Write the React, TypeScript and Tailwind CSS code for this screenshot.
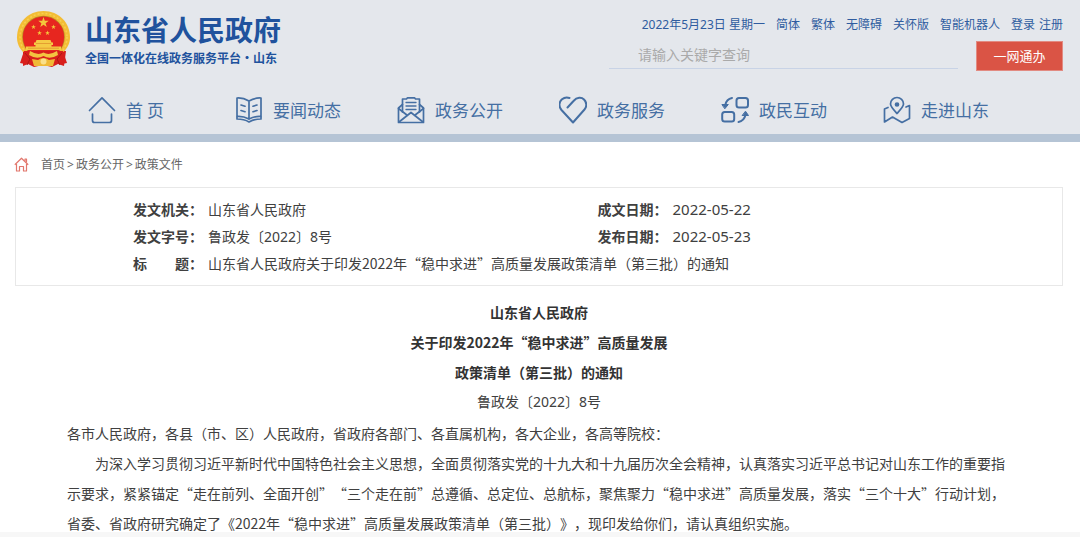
import clsx from "clsx";
import type { ReactNode } from "react";

const links = ["简体", "繁体", "无障碍", "关怀版", "智能机器人"];

// wider latin digits, chinese falls through to the CJK face
const latin = "font-['Noto_Sans','Noto_Sans_CJK_SC',sans-serif]";

const nav: { label: string; icon: ReactNode }[] = [
  {
    label: "首 页",
    icon: (
      <>
        <path d="M1.5 14.5 14 1.8l12.5 12.7" />
        <path d="M4.500 18v6.500q0 2 2 2h15q2 0 2-2V18" />
      </>
    ),
  },
  {
    label: "要闻动态",
    icon: (
      <>
        <path d="M14 5Q8 1.500 2 2v18.500q6-.5 12 2.500V5q6-3.500 12-3v18.500q-6-.5-12 2.500" />
        <path d="M2 21v2q7 0 12 3 5-3 12-3v-2" />
        <path d="m6 9 4 1.200M6 14.500l4 1.200M22 9l-4 1.200M22 14.500l-4 1.200" />
      </>
    ),
  },
  {
    label: "政务公开",
    icon: (
      <>
        <path d="M5.500 16V3h4l1-1.200h7L18.500 3h4v13" />
        <path d="M5.500 8.500 1.500 12v14.500h25V12l-4-3.500" />
        <path d="m1.500 12.500 9 7M26.500 12.500l-9 7M2 26l12-9.500L26 26" />
        <path d="M9 6.500h10M9 10h10M9 13.500h10" strokeWidth="1.300" />
      </>
    ),
  },
  {
    label: "政务服务",
    icon: (
      <path
        d="M8.500 11.500 14.500 5C18 1 22.500 1 25 3.500c3.200 3.200 2.800 7.500.5 10L14 26.500 2.500 14C-.5 10.500-.2 6 3 3.300 5.500 1.200 8.500 1.200 10.500 2"
        strokeWidth="2"
      />
    ),
  },
  {
    label: "政民互动",
    icon: (
      <>
        <rect x="15.500" y="2" width="11.500" height="9.500" rx="2.500" strokeWidth="2" />
        <rect x="1.200" y="16" width="12" height="9.500" rx="2.500" strokeWidth="2" />
        <path d="M11 2Q5.500 3 4.300 9" strokeWidth="2" />
        <path d="M17.500 26Q23 25 24.500 19" strokeWidth="2" />
        <path d="M1.300 8.500h6L4 12.500zM21.500 19.500h6L24.700 15.500z" fill="currentColor" strokeWidth="1" />
      </>
    ),
  },
  {
    label: "走进山东",
    icon: (
      <>
        <path d="M14 17.500C9.500 12.500 7.500 10.500 7.500 8a6.500 6.500 0 0 1 13 0c0 2.500-2 4.500-6.500 9.500z" />
        <circle cx="14" cy="8.500" r="1.500" fill="currentColor" />
        <path d="M5 11.500 1.500 13v13l8-5 9.500 5.500 7.500-4V9.500L23 11" />
      </>
    ),
  },
];

const App = () => {
  return (
    <div className="bg-white font-['Noto_Sans_CJK_SC','Noto_Sans',sans-serif] text-sm text-[#404040] [text-spacing-trim:space-all]">
      <Header />
      <nav
        aria-label="当前位置"
        className="flex h-[45px] items-center pl-[14px] text-xs text-[#666]"
      >
        <HomeIcon />
        <span className={clsx("ml-3 flex gap-0.5", latin)}>
          <a href="#home">首页</a>
          <span>&gt;</span>
          <a href="#open">政务公开</a>
          <span>&gt;</span>
          <a href="#policy">政策文件</a>
        </span>
      </nav>
      <main>
        <Meta />
        <article className="mt-[11px] pl-[67px] pr-[69px] leading-[30px]">
          <div className="text-center">
            <h1 className="font-bold text-[#333]">
              山东省人民政府
              <br />
              关于印发2022年“稳中求进”高质量发展
              <br />
              政策清单（第三批）的通知
            </h1>
            <p className={latin}>鲁政发〔2022〕8号</p>
          </div>
          <p className="mt-px">
            各市人民政府，各县（市、区）人民政府，省政府各部门、各直属机构，各大企业，各高等院校：
          </p>
          <p className="indent-[2em]">
            为深入学习贯彻习近平新时代中国特色社会主义思想，全面贯彻落实党的十九大和十九届历次全会精神，认真落实习近平总书记对山东工作的重要指示要求，紧紧锚定“走在前列、全面开创”“三个走在前”总遵循、总定位、总航标，聚焦聚力“稳中求进”高质量发展，落实“三个十大”行动计划，省委、省政府研究确定了《2022年“稳中求进”高质量发展政策清单（第三批）》，现印发给你们，请认真组织实施。
          </p>
        </article>
      </main>
      <footer className="-mt-1.5 h-[5px] bg-[#f7f7f7]" />
    </div>
  );
};

function Header() {
  return (
    <header className="border-b-8 border-[#b5c4d5] bg-[#e4e7ec]">
      <div className="flex h-[84px] justify-between pl-4 pr-[17px]">
        <a href="#home" className="flex gap-[15px] pt-[10px] text-[#20529d]">
          <Emblem />
          <span className="flex flex-col font-bold">
            <span className="text-[28px] leading-[38px]">山东省人民政府</span>
            <span className="text-xs leading-5">
              全国一体化在线政务服务平台·山东
            </span>
          </span>
        </a>
        <div className="flex flex-col items-end pt-4">
          <div
            className={clsx(
              "flex gap-[11px] text-xs leading-[18px] text-[#2f5c9f]",
              latin,
            )}
          >
            <span>2022年5月23日 星期一</span>
            {links.map((l) => (
              <a key={l} href="#top">
                {l}
              </a>
            ))}
            <span className="flex gap-1">
              <a href="#login">登录</a>
              <a href="#register">注册</a>
            </span>
          </div>
          <form
            className="mt-[7px] flex gap-[18px]"
            onSubmit={(e) => e.preventDefault()}
          >
            <input
              type="text"
              aria-label="请输入关键字查询"
              placeholder="请输入关键字查询"
              className="h-7 w-[349px] border-b border-[#c8d3e6] bg-transparent pb-0.5 pl-[29px] text-sm outline-none placeholder:text-[#aaa]"
            />
            <button
              type="button"
              className="h-[30px] w-[87px] border border-[#e28b82] bg-[#da5445] text-[13px] text-white"
            >
              一网通办
            </button>
          </form>
        </div>
      </div>
      <nav className="ml-[45px] mr-[63px] grid h-[50px] grid-cols-6 pt-0.5 text-[17px] text-[#456fa3]">
        {nav.map(({ label, icon }) => (
          <a
            key={label}
            href="#nav"
            className="flex items-center justify-center gap-[10px]"
          >
            <svg
              viewBox="0 0 28 28"
              className="size-7 shrink-0"
              fill="none"
              stroke="currentColor"
              strokeWidth="1.700"
              strokeLinecap="round"
              strokeLinejoin="round"
            >
              {icon}
            </svg>
            {label}
          </a>
        ))}
      </nav>
    </header>
  );
}

function Meta() {
  const th = "text-left font-bold";
  return (
    <div className="ml-[15px] mr-[17px] border border-[#e8e8e8] py-2 pl-[117px]">
      <table className="w-full table-fixed leading-[27px]">
        <colgroup>
          <col className="w-[75px]" />
          <col />
          <col className="w-[75px]" />
          <col />
        </colgroup>
        <tbody>
          <tr>
            <th className={th}>发文机关：</th>
            <td>山东省人民政府</td>
            <th className={th}>成文日期：</th>
            <td className={clsx("text-[15px]", latin)}>2022-05-22</td>
          </tr>
          <tr>
            <th className={th}>发文字号：</th>
            <td className={latin}>鲁政发〔2022〕8号</td>
            <th className={th}>发布日期：</th>
            <td className={clsx("text-[15px]", latin)}>2022-05-23</td>
          </tr>
          <tr>
            <th className={th}>标　　题：</th>
            <td colSpan={3}>
              山东省人民政府关于印发2022年“稳中求进”高质量发展政策清单（第三批）的通知
            </td>
          </tr>
        </tbody>
      </table>
    </div>
  );
}

function HomeIcon() {
  return (
    <svg
      viewBox="0 0 15 15"
      className="size-[15px]"
      fill="none"
      stroke="#e2776d"
      strokeWidth="1.200"
      strokeLinejoin="round"
    >
      <path d="M.8 7.800 7.500 1.200l6.700 6.600" />
      <path d="M11 4V2h1.500v3.500" />
      <path d="M2.500 7v7H5.500V9.500h4V14h3V7" />
    </svg>
  );
}

function Star({ x, y, r }: { x: number; y: number; r: number }) {
  const points = Array.from({ length: 10 }, (_, i) => {
    const d = i % 2 ? r * 0.4 : r;
    const a = (Math.PI * i) / 5;
    return `${x + d * Math.sin(a)},${y - d * Math.cos(a)}`;
  }).join(" ");
  return <polygon points={points} fill="#f3c63c" />;
}

function Emblem() {
  return (
    <svg viewBox="0 0 54 58" className="h-[58px] w-[54px] shrink-0">
      {/* ribbon */}
      <path d="M7 41 50 41 48 56 42 54 36 57 27 55 18 57 12 54 7 56z" fill="#d81f1c" />
      {/* wheat ring */}
      <path
        d="M27.500 1C12 1 1 12.500 1 27.500c0 6 2.500 11 6 14.500l40.500 0c4-4 6.500-9 6.500-14.500C54 12.500 43 1 27.500 1z"
        fill="#f3bd35"
      />
      <circle cx="27.500" cy="27" r="23.500" fill="none" stroke="#f7d050" strokeWidth="1.500" strokeDasharray="2 2" />
      <circle cx="27.500" cy="27" r="21.300" fill="#b98723" />
      <circle cx="27.500" cy="27" r="20.600" fill="#e7261f" />
      <Star x={27.500} y={12.500} r={5.500} />
      <Star x={17.500} y={17} r={2.500} />
      <Star x={37.500} y={17} r={2.500} />
      <Star x={23.500} y={23} r={2.500} />
      <Star x={31.500} y={23} r={2.500} />
      {/* gate */}
      <path
        d="M20.500 30h14l1 2.500H37V35h-1.500v1.500H45V40H10v-3.500h9.500V35H18v-2.500h1.500z"
        fill="#f5cb45"
      />
      <path d="M20 33.500h15M12 38.200h31" stroke="#dd8c28" strokeWidth=".7" />
      <path d="M8 41h39l4 12-5 1-5-5-13 4-13-4-6 5-5-1z" fill="#d81f1c" />
      <path d="M14 41q8 5 13.500 1.500Q33 46 41 41l1 4q-8 5-14.500 1Q21 50 13 45z" fill="#f3c440" />
      {/* gear and knot */}
      <path d="M22 50q5.500-4 11 0l6-1-2 7H18l-2-7z" fill="#f0b936" />
      <circle cx="27.500" cy="51.500" r="3" fill="#fae08a" />
      <path d="m9 43 5 6-3 6M46 43l-5 6 3 6" fill="none" stroke="#ad1714" strokeWidth="1" />
    </svg>
  );
}

export default App;
